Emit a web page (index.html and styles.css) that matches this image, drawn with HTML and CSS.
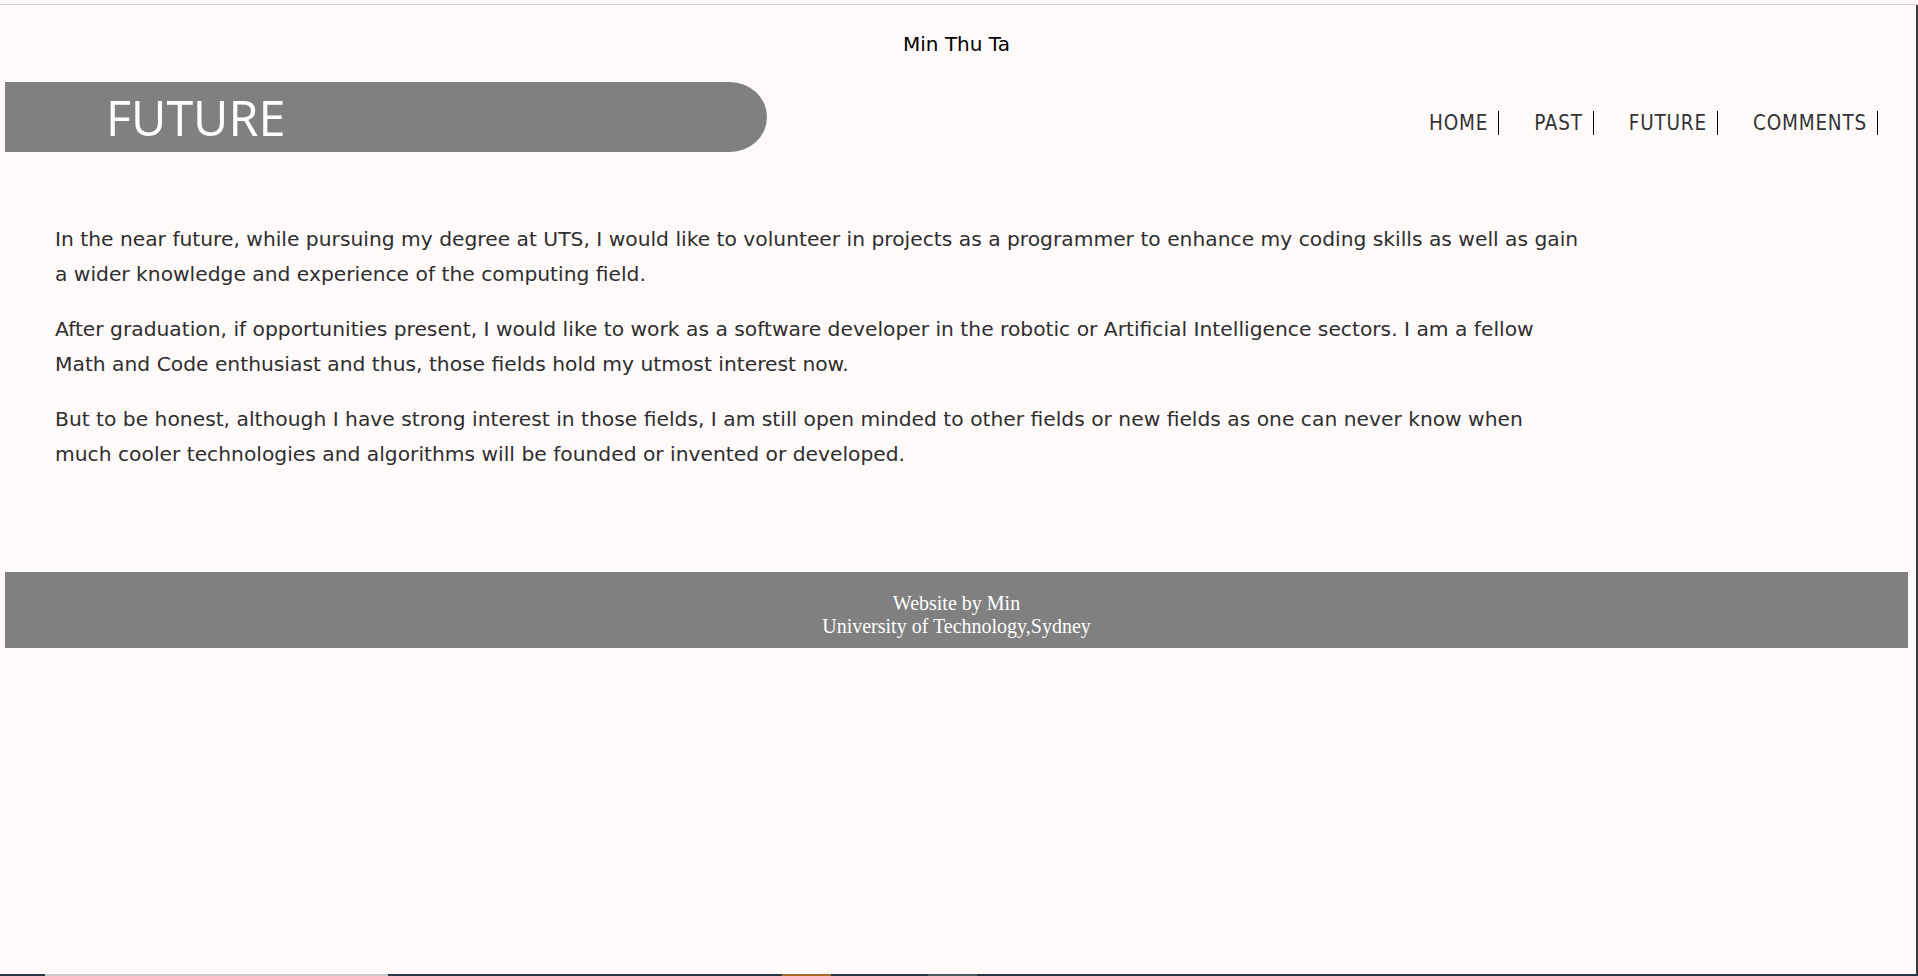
FILE: index.html
```html
<!DOCTYPE html>
<html lang="en">
<head>
<meta charset="utf-8">
<title>Future - Min Thu Ta</title>
<link rel="stylesheet" href="styles.css">
</head>
<body>
<div class="chrome-line"></div>
<div class="window">
  <div class="page">
    <header class="site-header">
      <div class="site-name">Min Thu Ta</div>
      <div class="header-row">
        <h1 class="banner">FUTURE</h1>
        <nav class="nav">
          <ul class="nav-list">
            <li class="nav-item"><a class="nav-link" href="#">HOME</a></li>
            <li class="nav-item"><a class="nav-link" href="#">PAST</a></li>
            <li class="nav-item"><a class="nav-link" href="#">FUTURE</a></li>
            <li class="nav-item"><a class="nav-link" href="#">COMMENTS</a></li>
          </ul>
        </nav>
      </div>
    </header>
    <main class="content">
      <p class="para">In the near future, while pursuing my degree at UTS, I would like to volunteer in projects as a programmer to enhance my coding skills as well as gain a wider knowledge and experience of the computing field.</p>
      <p class="para">After graduation, if opportunities present, I would like to work as a software developer in the robotic or Artificial Intelligence sectors. I am a fellow Math and Code enthusiast and thus, those fields hold my utmost interest now.</p>
      <p class="para">But to be honest, although I have strong interest in those fields, I am still open minded to other fields or new fields as one can never know when much cooler technologies and algorithms will be founded or invented or developed.</p>
    </main>
    <footer class="footer">
      <p class="footer-text">Website by Min<br>University of Technology,Sydney</p>
    </footer>
  </div>
</div>
<div class="taskbar">
  <span class="tb-seg tb-gap1"></span>
  <span class="tb-seg tb-light"></span>
  <span class="tb-seg tb-gap2"></span>
  <span class="tb-seg tb-orange"></span>
  <span class="tb-seg tb-gap3"></span>
  <span class="tb-seg tb-grey"></span>
</div>
</body>
</html>
```
FILE: styles.css
```css
* { box-sizing: border-box; }

html, body {
  margin: 0;
  padding: 0;
}

body {
  height: 976px;
  background: #fffafa;
  display: flex;
  flex-direction: column;
  font-family: "DejaVu Sans", "Noto Sans", sans-serif;
  overflow: hidden;
}

.chrome-line {
  margin-top: 4px;
  height: 1px;
  background: #d6d6d6;
  flex: none;
}

.window {
  flex: 1;
  border-right: 2px solid #3c3c3c;
  display: flex;
  flex-direction: column;
}

.page {
  margin: 0 8px 0 5px;
}

.site-name {
  text-align: center;
  font-size: 20px;
  line-height: 24px;
  color: #000;
  margin-top: 27px;
}

.header-row {
  margin-top: 26px;
  display: flex;
  align-items: center;
  justify-content: space-between;
}

.banner {
  margin: 0;
  width: 762px;
  height: 70px;
  background: #808080;
  color: #fff;
  border-radius: 0 37px 37px 0 / 0 35px 35px 0;
  padding-left: 101px;
  font-family: "Open Sans", "DejaVu Sans", sans-serif;
  font-weight: 400;
  font-size: 48.5px;
  line-height: 70px;
}

.nav {
  padding-top: 11px;
  margin-right: 30px;
}

.nav-list {
  list-style: none;
  margin: 0;
  padding: 0;
  display: flex;
}

.nav-item {
  margin-left: 35px;
}

.nav-link {
  color: #333;
  text-decoration: none;
  font-size: 20.5px;
  font-stretch: condensed;
  letter-spacing: 0.8px;
  padding-right: 10px;
  border-right: 1px solid #000;
}

.content {
  padding: 50px 0 80px 50px;
}

.para {
  margin: 20px 0;
  max-width: 1529px;
  font-size: 20.25px;
  line-height: 35px;
  color: #2e2e2e;
}

.footer {
  background: #808080;
  color: #fff;
  text-align: center;
  height: 76px;
  padding-top: 20px;
}

.footer-text {
  margin: 0;
  font-family: "Liberation Serif", "Times New Roman", serif;
  font-size: 20px;
  line-height: 23px;
}

.taskbar {
  flex: none;
  height: 2px;
  display: flex;
  background: #253841;
}

.tb-seg { display: block; height: 2px; }
.tb-gap1 { width: 45px; }
.tb-light { width: 343px; background: #c8c8c8; }
.tb-gap2 { width: 394px; }
.tb-orange { width: 49px; background: #a8692e; }
.tb-gap3 { width: 97px; }
.tb-grey { width: 49px; background: #4a5860; }
```
